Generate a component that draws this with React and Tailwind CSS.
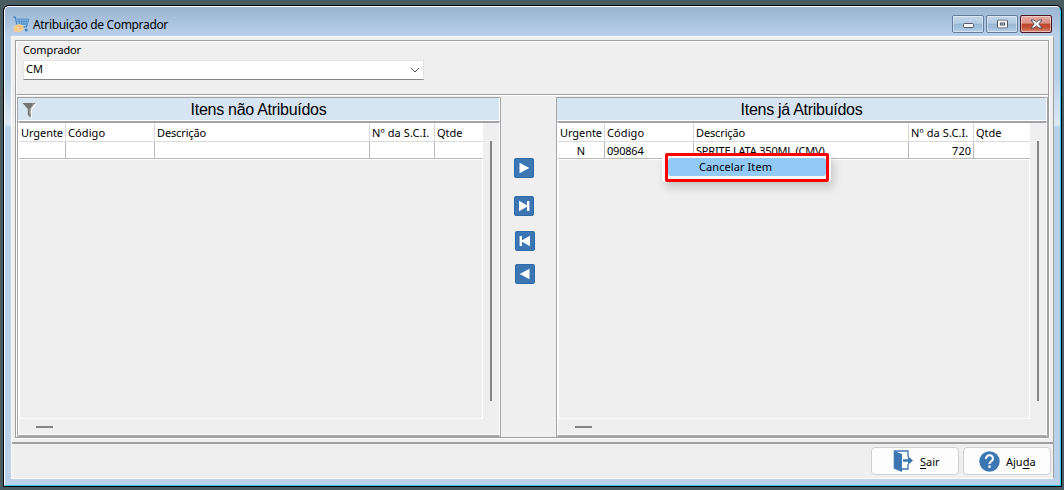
import React from 'react';

function CartIcon() {
  return (
    <svg className="mt-[9px] ml-[8px] h-[17px] w-[17px] shrink-0" viewBox="0 0 17 17" fill="none">
      <path d="M.3 1.2h2l2 9.6h9L15.7 3" stroke="#4587c5" strokeWidth="1.2" />
      <path d="M3.5 3h12l-1.6 6H4.6z" fill="#8db7de" />
      <path d="M3.4 3h12M4 5.5h11M4.5 8h10M6 3l1 6M8.5 3l.3 6M11 3l-.3 6M13.5 3l-1 6" stroke="#4b8dcb" strokeWidth=".8" />
      <circle cx="13.2" cy="14" r="1.6" fill="#4587c5" />
      <path d="M.5 15V11l2.6-2.2 3.6-.8 3.6 1.6.4 4-3.5 2.2-5 .4z" fill="#f7cd92" />
      <path d="M4.5 10.4l4 .6M6 12.6l3.5-.3" stroke="#eab06c" strokeWidth=".7" />
    </svg>
  );
}

function FilterIcon() {
  return (
    <svg className="absolute top-[4px] left-[4px] h-[17px] w-[15px]" viewBox="0 0 15 17">
      <path d="M1 1h13L9.3 7v8.5L6.2 13V7z" fill="#fff" transform="translate(.8 .8)" />
      <path d="M.5 1h13L8.8 7v8.5L5.8 13V7z" fill="#747474" />
      <path d="M10.5 2h1.7L8 7.4v5" fill="none" stroke="#c6c6c6" strokeWidth=".8" />
    </svg>
  );
}

function MoveButton({ kind, className }) {
  return (
    <button className={`block h-5 w-5 shrink-0 ${className}`}>
      <svg viewBox="0 0 20 20" className="h-5 w-5">
        <rect x=".5" y=".5" width="19" height="19" rx="1.3" fill="#3c76b3" stroke="#2f6aac" />
        {kind === 'next' && <path d="M5.5 4.7v10.6l9.8-5.3z" fill="#fff" />}
        {kind === 'last' && <path d="M5 4.7v10.6l8-4.5V15h2.4V5H13v4.2z" fill="#fff" />}
        {kind === 'first' && <path d="M15 4.7v10.6l-8-4.5V15H4.6V5H7v4.2z" fill="#fff" />}
        {kind === 'prev' && <path d="M14.5 4.7v10.6L4.7 10z" fill="#fff" />}
      </svg>
    </button>
  );
}

function CaptionButton({ kind }) {
  const close = kind === 'close';
  return (
    <button
      className={
        'flex h-[18px] w-8 items-center justify-center rounded-[2px] border shadow-[inset_0_0_0_1px_#ffffff70] ' +
        (close
          ? 'border-[#4a1421] bg-[linear-gradient(#e7aaa0_0%,#da9386_45%,#bd432c_50%,#c3543c_75%,#dc8d79_100%)]'
          : 'border-[#627e9f] bg-[linear-gradient(#c1d5e9_0%,#b6cce2_45%,#98b5d2_50%,#a3bfdb_75%,#b8d0e9_100%)]')
      }
    >
      {kind === 'min' && (
        <svg className="h-[5px] w-[11px] translate-y-px" viewBox="0 0 11 5">
          <rect x=".5" y=".5" width="10" height="4" rx="1" fill="#f7f7f7" stroke="#555a6b" />
        </svg>
      )}
      {kind === 'max' && (
        <svg className="h-[9px] w-[11px] -translate-y-[0.5px]" viewBox="0 0 11 9">
          <rect x=".5" y=".5" width="10" height="8" rx="1" fill="#f7f7f7" stroke="#555a6b" />
          <rect x="3.5" y="3.5" width="4" height="2" fill="#a7c1dc" stroke="#555a6b" />
        </svg>
      )}
      {close && (
        <svg className="h-[10px] w-[13px]" viewBox="0 0 13 10">
          <path d="M1 1h3l2.5 2L9 1h3L8.8 5 12 9H9L6.5 7 4 9H1l3.2-4z" fill="#f8f8f8" stroke="#535666" strokeLinejoin="round" />
        </svg>
      )}
    </button>
  );
}

function ItemPanel({ title, filter, cols, row, width, titleClass }) {
  const labels = [
    ['Urgente', 'pl-[2px] tracking-[-0.06px]'],
    ['Código', 'pl-[2px] tracking-[0.1px]'],
    ['Descrição', 'pl-[2px] tracking-[-0.14px]'],
    ['Nº da S.C.I.', 'pl-[2px] tracking-[0.1px]'],
    ['Qtde', 'pl-[2px] tracking-[-0.05px]'],
  ];
  const cellPad = ['text-center', 'pl-[2px] tracking-[-0.2px]', 'pl-[2px] tracking-[-0.2px]', 'pr-[2px] text-right', ''];
  return (
    <section className={`${width} flex flex-col border-r border-l border-[#a5a5ab]`}>
      <header className="relative flex h-[24px] items-center justify-center border-t border-r border-b border-t-[#a0a0a0] border-r-white border-b-white bg-[#d7e4f2]">
        {filter && <FilterIcon />}
        <h2 className={`pt-[2px] font-['Liberation_Sans',sans-serif] text-[16px] leading-[22px] whitespace-nowrap text-black ${titleClass}`}>{title}</h2>
      </header>
      <div className="flex h-[317px] border-t-2 border-r border-b-2 border-l border-t-[#a3a3a8] border-r-white border-b-[#a5a5a5] border-l-white">
        <div className="flex min-w-0 flex-1 flex-col border-b border-white">
          <div className="flex h-[296px] flex-col">
            <div className="h-[36px] bg-white">
              <div className={`grid h-[19px] border-b border-[#dadada] leading-[19px] ${cols}`}>
                {labels.map(([t, c], i) => (
                  <div key={t} className={`overflow-visible whitespace-nowrap ${i < 4 ? 'border-r border-[#dadada]' : ''} ${c}`}>{t}</div>
                ))}
              </div>
              <div className={`grid h-[17px] border-b border-[#b9b9b9] leading-[18px] ${cols}`}>
                {labels.map((l, i) => (
                  <div key={l[0]} className={`h-[16px] whitespace-nowrap ${i < 4 ? 'border-r border-[#b9b9b9]' : ''} ${cellPad[i]}`}>{row ? row[i] : ''}</div>
                ))}
              </div>
            </div>
            <div className="flex-1 border-t border-r border-b border-l border-white" />
          </div>
          <div className="flex flex-1 items-center pl-[17px]">
            <div className="h-[2px] w-[17px] bg-[#858585]" />
          </div>
        </div>
        <div className="flex w-[16px] justify-center border-b border-white">
          <div className="mt-[18px] h-[260px] w-[2px] bg-[#858585]" />
        </div>
      </div>
    </section>
  );
}

function ContextMenu() {
  return (
    <div className="absolute top-[153px] left-[662px] h-[29px] w-[169px] rounded-[4px] bg-[#f9f9f9] pl-[3px] shadow-[3px_6px_9px_#00000028]">
      <div className="h-[29px] w-[164px] rounded-[2px] border-[3px] border-[#fa0000] bg-[#f5f9fd] pt-[2px]">
        <button className="block h-[18px] w-full rounded-[3px] bg-[#91c9f7] pl-[31px] text-left leading-[18px] tracking-[0.08px]">Cancelar Item</button>
      </div>
    </div>
  );
}

export default function App() {
  return (
    <div className="relative h-[490px] w-[1064px] overflow-hidden bg-[#4a5b62] pt-[5px] pl-[3px] font-['Noto_Sans',sans-serif] text-[11px] text-black">
      <div className="h-[482px] w-[1059px] rounded-t-[6px] border border-black bg-black">
        <div className="h-[480px] w-[1057px] rounded-t-[5px] border border-t-white border-r-[#36c9e4] border-b-[#36c9e4] border-l-white bg-[linear-gradient(#9bb4d1_0px,#b9d1ea_30px,#b9d1ea_70px,#dce8f5_118px,#b9d1ea_120px)]">
          <div className="flex h-[29px] justify-between">
            <div className="flex">
              <CartIcon />
              <h1 className="ml-[3px] pt-[8px] text-[12px] leading-[20px] tracking-[-0.33px] whitespace-nowrap">Atribuição de Comprador</h1>
            </div>
            <div className="mt-[8px] mr-[8px] flex gap-[2px]">
              <CaptionButton kind="min" />
              <CaptionButton kind="max" />
              <CaptionButton kind="close" />
            </div>
          </div>
          <main className="ml-[6px] flex h-[443px] w-[1043px] flex-col border-t border-r border-b border-l border-t-white border-r-[#a0a0a0] border-b-white border-l-white bg-[#efefef]">
            <div className="mt-[3px] ml-[3px] h-[399px] w-[1035px] border-r border-b border-white">
              <div className="h-[398px] w-[1034px] border border-[#a0a0a0] bg-[#efefef]">
                <div className="h-[54px] border-t border-b border-l border-t-white border-b-[#a0a0a0] border-l-white pl-[6px]">
                  <label className="block leading-[16px] tracking-[-0.12px]">Comprador</label>
                  <button className="mt-[2px] flex h-[20px] w-[401px] items-center justify-between border border-t-[#e6e6e6] border-r-[#e0e0e0] border-b-[#858585] border-l-[#e6e6e6] bg-white pr-[3px] pb-[2px] pl-[2px]">
                    <span>CM</span>
                    <svg className="mt-[2px] h-[6px] w-[10px]" viewBox="0 0 10 6" fill="none">
                      <path d="M1 1l4 4 4-4" stroke="#555" />
                    </svg>
                  </button>
                </div>
                <div className="flex h-[342px] border-t border-l border-white pt-px">
                  <ItemPanel
                    width="w-[484px]"
                    title="Itens não Atribuídos"
                    titleClass="tracking-[-0.28px]"
                    cols="grid-cols-[47px_89px_215px_65px_1fr]"
                    filter
                  />
                  <nav className="flex w-[55px] flex-col pt-[61px] pl-[13px]">
                    <MoveButton kind="next" className="" />
                    <MoveButton kind="last" className="mt-[18px]" />
                    <MoveButton kind="first" className="mt-[15px] ml-px" />
                    <MoveButton kind="prev" className="mt-[13px] ml-px" />
                  </nav>
                  <ItemPanel
                    width="w-[492px]"
                    title="Itens já Atribuídos"
                    titleClass="tracking-[-0.28px]"
                    cols="grid-cols-[47px_89px_215px_65px_1fr]"
                    row={['N', '090864', 'SPRITE LATA 350ML (CMV)', '720', '']}
                  />
                </div>
              </div>
            </div>
            <footer className="mt-[3px] flex flex-1 justify-end gap-[4px] border-t-2 border-[#a0a0a0] pt-[3px] pr-[2px]">
              <button className="flex h-[28px] w-[88px] items-center rounded-[4px] border border-[#d0d0d0] bg-[#fdfdfd]">
                <svg className="ml-[21px] h-[22px] w-[21px]" viewBox="0 0 21 22">
                  <path d="M1 1h14v6M15 14v5H9" fill="none" stroke="#3c76b3" strokeWidth="1.3" />
                  <path d="M.7.7L9 4v18L.7 18.5z" fill="#3c76b3" />
                  <path d="M10 9.3h5V6.2l5 4.3-5 4.3v-3.1h-5z" fill="#3c76b3" />
                </svg>
                <span className="ml-[6px] pt-[2px]"><u className="underline-offset-2">S</u>air</span>
              </button>
              <button className="flex h-[28px] w-[88px] items-center rounded-[4px] border border-[#d0d0d0] bg-[#fdfdfd]">
                <svg className="ml-[15px] h-[21px] w-[21px]" viewBox="0 0 21 21">
                  <circle cx="10.5" cy="10.5" r="10.2" fill="#3c76b3" />
                  <path d="M7 8c0-2.6 1.5-3.7 3.6-3.7S14 5.6 14 7.7c0 2.5-3.5 2.6-3.5 5.2" fill="none" stroke="#fff" strokeWidth="2.1" />
                  <circle cx="10.5" cy="15.7" r="1.35" fill="#fff" />
                </svg>
                <span className="ml-[6px] pt-[2px]">Aju<u className="underline-offset-2">d</u>a</span>
              </button>
            </footer>
          </main>
        </div>
      </div>
      <ContextMenu />
    </div>
  );
}
